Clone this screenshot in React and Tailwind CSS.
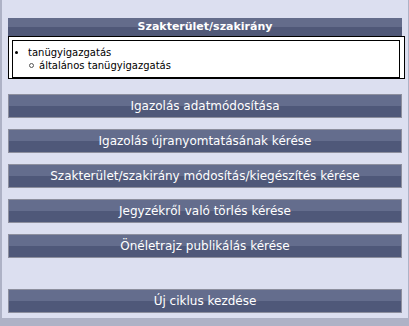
export default function App() {
  const buttons = [
    "Igazolás adatmódosítása",
    "Igazolás újranyomtatásának kérése",
    "Szakterület/szakirány módosítás/kiegészítés kérése",
    "Jegyzékről való törlés kérése",
    "Önéletrajz publikálás kérése",
  ];
  const font = { fontFamily: '"DejaVu Sans", Verdana, sans-serif' };
  const Btn = ({ label, className }) => (
    <div
      className={
        "h-[24px] border border-[#8d8f9e] bg-[linear-gradient(#646d8d_50%,#4f5879_50%)] text-white text-[12px] leading-[22px] text-center whitespace-nowrap " +
        (className || "")
      }
    >
      {label}
    </div>
  );
  return (
    <div className="w-[409px] h-[326px] bg-[#aeb2c6] flex flex-col" style={font}>
      <div className="ml-[2px] mr-[1px] h-[318px] bg-[#dcdff0] px-[6px] pt-[18px] flex flex-col">
        <div className="h-[18px] bg-[linear-gradient(#646c8b_50%,#505878_50%)] text-white font-bold text-[11px] leading-[18px] text-center">
          Szakterület/szakirány
        </div>
        <div className="w-[397px] h-[43px] border border-black bg-white pt-[3px] pl-[3px] pr-[4px]">
          <div className="h-[38px] border border-black pt-[5px] text-[10px] leading-[13px] text-black">
            <div className="flex items-center h-[13px]">
              <span className="ml-[2px] w-[3px] h-[3px] rounded-full bg-black shrink-0" />
              <span className="ml-[10px]">tanügyigazgatás</span>
            </div>
            <div className="flex items-center h-[13px]">
              <span className="ml-[16px] w-[5px] h-[5px] rounded-full border border-[#555] shrink-0" />
              <span className="ml-[5px]">általános tanügyigazgatás</span>
            </div>
          </div>
        </div>
        <div className="mt-[15px] flex flex-col gap-[11px]">
          {buttons.map((b) => (
            <Btn key={b} label={b} />
          ))}
        </div>
        <Btn label="Új ciklus kezdése" className="mt-[31px]" />
      </div>
    </div>
  );
}
